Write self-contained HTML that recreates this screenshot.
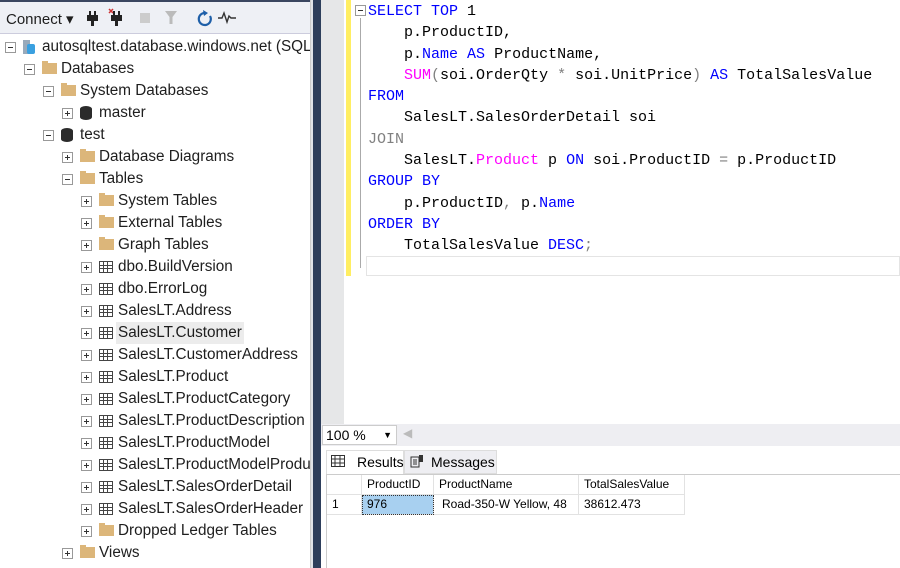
<!DOCTYPE html>
<html><head><meta charset="utf-8"><style>
*{margin:0;padding:0;box-sizing:border-box}
body{width:900px;height:568px;overflow:hidden;background:#fff;font-family:"Liberation Sans",sans-serif;position:relative}
#left{position:absolute;left:0;top:0;width:311px;height:568px;background:#fff;border-right:1px solid #ccc;overflow:hidden}
#tb{position:absolute;left:0;top:0;width:311px;height:34px;background:#eef0f5;border-bottom:1px solid #ccd;border-top:2px solid #3a4660}
#tb span{position:absolute;font-size:15px;color:#1e1e1e}
.row{position:absolute;height:22px;font-size:15.3px;color:#1e1e1e;line-height:22px;white-space:nowrap}
.ex{position:absolute;top:6px;width:11px;height:11px;border:1px solid #999;background:#fff}
.ex::before{content:"";position:absolute;left:2px;top:4px;width:5px;height:1px;background:#333}
.ex.p::after{content:"";position:absolute;left:4px;top:2px;width:1px;height:5px;background:#333}
.fd{position:absolute;top:5px;width:15px;height:11px;background:#dcb67a}
.fd::before{content:"";position:absolute;left:0;top:-2px;width:6px;height:3px;background:#dcb67a}
.db{position:absolute;top:4px;width:12px;height:14px;background:#2b2b2b;border-radius:6px/3px}
.tbl{position:absolute;top:5px;width:14px;height:12px;border:1px solid #444;background:
linear-gradient(#444,#444) 0 3px/100% 1px no-repeat,linear-gradient(#444,#444) 0 6px/100% 1px no-repeat,
linear-gradient(#444,#444) 3px 0/1px 100% no-repeat,linear-gradient(#444,#444) 7px 0/1px 100% no-repeat}
.tx{position:absolute;top:0}
#div1{position:absolute;left:311px;top:0;width:2px;height:568px;background:#e0e3e8}
#div2{position:absolute;left:313px;top:0;width:8px;height:568px;background:#2d3e5b}
#gut{position:absolute;left:321px;top:0;width:23px;height:424px;background:#e6e7e8}
#ybar{position:absolute;left:346px;top:0;width:5px;height:276px;background:#ffee62}
#code{position:absolute;left:368px;top:1px;font-family:"Liberation Mono",monospace;font-size:15px;line-height:21.3px;color:#000;white-space:pre}
.k{color:#0000ff}.f{color:#ff00ff}.g{color:#808080}
#zoom{position:absolute;left:321px;top:424px;width:579px;height:22px;background:#eeeef2}
#zsel{position:absolute;left:1px;top:1px;width:75px;height:20px;background:#fff;border:1px solid #ccc;font-size:14px;padding-left:3px;line-height:18px}
#tabs{position:absolute;left:321px;top:446px;width:579px;height:28px;background:#fff}
.tab{position:absolute;top:4px;height:24px;font-size:14px;line-height:22px;background:#eeeef2;border:1px solid #ddd}
#grid{position:absolute;left:326px;top:474px;width:574px;height:94px;background:#fff;border-left:1px solid #ccc;border-top:1px solid #ccc}
.c{position:absolute;font-size:12px;line-height:19px;height:20px;border-right:1px solid #e2e2e2;border-bottom:1px solid #e2e2e2;padding-left:5px}
</style></head><body>
<div id="left">
<div id="tb">
<span style="left:6px;top:8px">Connect ▾</span>
<svg style="position:absolute;left:84px;top:6px" width="80" height="20">
<rect x="5" y="3" width="2" height="5" fill="#222"/><rect x="10" y="3" width="2" height="5" fill="#222"/><rect x="3" y="7" width="11" height="6" fill="#222"/><rect x="7" y="13" width="3" height="5" fill="#222"/>
<path d="M25 1l4 4M29 1l-4 4" stroke="#c33" stroke-width="1.5"/><rect x="29" y="3" width="2" height="5" fill="#222"/><rect x="34" y="3" width="2" height="5" fill="#222"/><rect x="27" y="7" width="11" height="6" fill="#222"/><rect x="31" y="13" width="3" height="5" fill="#222"/>
<rect x="56" y="5" width="10" height="10" fill="#ccc"/>
</svg>
<svg style="position:absolute;left:162px;top:7px" width="90" height="18">
<path d="M3 2h12l-4.5 6v7h-3v-7z" fill="#bbb"/>
<path d="M43 4a6 6 0 1 0 5 3" stroke="#1e5fa8" stroke-width="2.2" fill="none"/><path d="M41 1l5 3-4 3z" fill="#1e5fa8"/>
<path d="M56 9h4l2-5 3 9 2-6 2 2h5" stroke="#333" stroke-width="1.4" fill="none"/>
</svg>
</div>

<div class="row" style="top:36px;left:0;width:311px"><div class="ex" style="left:5px"></div>
<svg style="position:absolute;left:22px;top:3px" width="14" height="16"><rect x="1" y="1" width="7" height="14" fill="#9ab"/><rect x="5" y="5" width="8" height="10" rx="2" fill="#3aa0e0"/></svg>
<span class="tx" style="left:42px">autosqltest.database.windows.net (SQL S</span></div>
<div class="row" style="top:58px"><div class="ex" style="left:24px"></div><div class="fd" style="left:42px"></div><span class="tx" style="left:61px">Databases</span></div>
<div class="row" style="top:80px"><div class="ex" style="left:43px"></div><div class="fd" style="left:61px"></div><span class="tx" style="left:80px">System Databases</span></div>
<div class="row" style="top:102px"><div class="ex p" style="left:62px"></div><div class="db" style="left:80px"></div><span class="tx" style="left:99px">master</span></div>
<div class="row" style="top:124px"><div class="ex" style="left:43px"></div><div class="db" style="left:61px"></div><span class="tx" style="left:80px">test</span></div>
<div class="row" style="top:146px"><div class="ex p" style="left:62px"></div><div class="fd" style="left:80px"></div><span class="tx" style="left:99px">Database Diagrams</span></div>
<div class="row" style="top:168px"><div class="ex" style="left:62px"></div><div class="fd" style="left:80px"></div><span class="tx" style="left:99px">Tables</span></div>
<div class="row" style="top:190px"><div class="ex p" style="left:81px"></div><div class="fd" style="left:99px"></div><span class="tx" style="left:118px">System Tables</span></div>
<div class="row" style="top:212px"><div class="ex p" style="left:81px"></div><div class="fd" style="left:99px"></div><span class="tx" style="left:118px">External Tables</span></div>
<div class="row" style="top:234px"><div class="ex p" style="left:81px"></div><div class="fd" style="left:99px"></div><span class="tx" style="left:118px">Graph Tables</span></div>
<div class="row" style="top:256px"><div class="ex p" style="left:81px"></div><div class="tbl" style="left:99px"></div><span class="tx" style="left:118px">dbo.BuildVersion</span></div>
<div class="row" style="top:278px"><div class="ex p" style="left:81px"></div><div class="tbl" style="left:99px"></div><span class="tx" style="left:118px">dbo.ErrorLog</span></div>
<div class="row" style="top:300px"><div class="ex p" style="left:81px"></div><div class="tbl" style="left:99px"></div><span class="tx" style="left:118px">SalesLT.Address</span></div>
<div class="row" style="top:322px"><div class="ex p" style="left:81px"></div><div class="tbl" style="left:99px"></div><span class="tx" style="left:116px;background:#ececec;padding:0 2px">SalesLT.Customer</span></div>
<div class="row" style="top:344px"><div class="ex p" style="left:81px"></div><div class="tbl" style="left:99px"></div><span class="tx" style="left:118px">SalesLT.CustomerAddress</span></div>
<div class="row" style="top:366px"><div class="ex p" style="left:81px"></div><div class="tbl" style="left:99px"></div><span class="tx" style="left:118px">SalesLT.Product</span></div>
<div class="row" style="top:388px"><div class="ex p" style="left:81px"></div><div class="tbl" style="left:99px"></div><span class="tx" style="left:118px">SalesLT.ProductCategory</span></div>
<div class="row" style="top:410px"><div class="ex p" style="left:81px"></div><div class="tbl" style="left:99px"></div><span class="tx" style="left:118px">SalesLT.ProductDescription</span></div>
<div class="row" style="top:432px"><div class="ex p" style="left:81px"></div><div class="tbl" style="left:99px"></div><span class="tx" style="left:118px">SalesLT.ProductModel</span></div>
<div class="row" style="top:454px"><div class="ex p" style="left:81px"></div><div class="tbl" style="left:99px"></div><span class="tx" style="left:118px">SalesLT.ProductModelProductDescription</span></div>
<div class="row" style="top:476px"><div class="ex p" style="left:81px"></div><div class="tbl" style="left:99px"></div><span class="tx" style="left:118px">SalesLT.SalesOrderDetail</span></div>
<div class="row" style="top:498px"><div class="ex p" style="left:81px"></div><div class="tbl" style="left:99px"></div><span class="tx" style="left:118px">SalesLT.SalesOrderHeader</span></div>
<div class="row" style="top:520px"><div class="ex p" style="left:81px"></div><div class="fd" style="left:99px"></div><span class="tx" style="left:118px">Dropped Ledger Tables</span></div>
<div class="row" style="top:542px"><div class="ex p" style="left:62px"></div><div class="fd" style="left:80px"></div><span class="tx" style="left:99px">Views</span></div>
</div>
<div id="div1"></div><div id="div2"></div>
<div id="gut"></div><div id="ybar"></div>
<div class="ex" style="left:355px;top:5px"></div>
<div style="position:absolute;left:360px;top:18px;width:1px;height:250px;background:#aaa"></div>
<div style="position:absolute;left:366px;top:256px;width:534px;height:20px;border:1px solid #e4e4e4"></div>
<div id="code"><span class="k">SELECT TOP</span> 1
    p.ProductID,
    p.<span class="k">Name</span> <span class="k">AS</span> ProductName,
    <span class="f">SUM</span><span class="g">(</span>soi.OrderQty <span class="g">*</span> soi.UnitPrice<span class="g">)</span> <span class="k">AS</span> TotalSalesValue
<span class="k">FROM</span>
    SalesLT.SalesOrderDetail soi
<span class="g">JOIN</span>
    SalesLT.<span class="f">Product</span> p <span class="k">ON</span> soi.ProductID <span class="g">=</span> p.ProductID
<span class="k">GROUP BY</span>
    p.ProductID<span class="g">,</span> p.<span class="k">Name</span>
<span class="k">ORDER BY</span>
    TotalSalesValue <span class="k">DESC</span><span class="g">;</span></div>
<div id="zoom"><div id="zsel">100 %<span style="position:absolute;right:4px;top:0;font-size:9px">▼</span></div>
<span style="position:absolute;left:82px;top:2px;color:#bbb;font-size:12px">◀</span></div>
<div id="tabs">
<div class="tab" style="left:5px;width:78px;background:#fff;border-bottom:none;padding-left:30px">Results</div>
<svg style="position:absolute;left:10px;top:9px" width="14" height="12"><rect x="0.5" y="0.5" width="13" height="11" fill="none" stroke="#333"/><path d="M0 4h14M0 8h14M4 0v12M9 0v12" stroke="#333"/></svg>
<div class="tab" style="left:83px;width:93px;padding-left:26px">Messages</div>
<svg style="position:absolute;left:89px;top:8px" width="14" height="14"><rect x="1" y="3" width="8" height="10" fill="none" stroke="#333"/><path d="M3 6h4M3 8h4M3 10h4" stroke="#333"/><rect x="9" y="1" width="4" height="7" fill="#333"/></svg>
</div>
<div id="grid">
<div class="c" style="left:0;top:0;width:35px;background:#fff"></div>
<div class="c" style="left:35px;top:0;width:72px">ProductID</div>
<div class="c" style="left:107px;top:0;width:145px">ProductName</div>
<div class="c" style="left:252px;top:0;width:106px">TotalSalesValue</div>
<div class="c" style="left:0;top:20px;width:35px">1</div>
<div class="c" style="left:35px;top:20px;width:72px;background:#a8d0f0;outline:1px dotted #333;outline-offset:-1px">976</div>
<div class="c" style="left:107px;top:20px;width:145px;padding-left:8px">Road-350-W Yellow, 48</div>
<div class="c" style="left:252px;top:20px;width:106px">38612.473</div>
</div>
</body></html>
